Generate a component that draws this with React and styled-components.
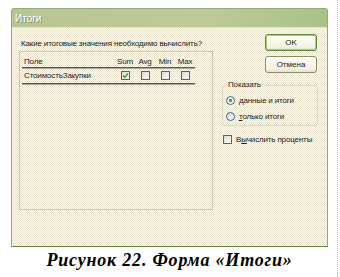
import React from 'react'
import styled, { createGlobalStyle } from 'styled-components'

const GlobalStyle = createGlobalStyle`
  html, body {
    margin: 0;
    padding: 0;
    background: #fff;
  }
  body {
    font-family: "Liberation Sans", Arial, sans-serif;
  }
`

const columns = ['Sum', 'Avg', 'Min', 'Max']

function Check({ checked }) {
  return (
    <CheckBox>
      {checked && (
        <svg width="7" height="7" viewBox="0 0 7 7">
          <path d="M1 3.5 L2.8 5.3 L6 1.5" stroke="#3aa82a" strokeWidth="1.6" fill="none" />
        </svg>
      )}
    </CheckBox>
  )
}

export default function App() {
  return (
    <>
      <GlobalStyle />
      <Page>
        <Window>
          <TitleBar>Итоги</TitleBar>
          <Body>
            <LeftCol>
              <Question>Какие итоговые значения необходимо вычислить?</Question>
              <ListBox>
                <Row $header>
                  <Name>Поле</Name>
                  {columns.map((c) => (
                    <Cell key={c}>{c}</Cell>
                  ))}
                </Row>
                <Row>
                  <Name>СтоимостьЗакупки</Name>
                  {columns.map((c, i) => (
                    <Cell key={c}>
                      <Check checked={i === 0} />
                    </Cell>
                  ))}
                </Row>
              </ListBox>
            </LeftCol>

            <RightCol>
              <Button $default>OK</Button>
              <Button>Отмена</Button>

              <Group>
                <Legend>Показать</Legend>
                <Option>
                  <Radio $on />
                  <span><u>д</u>анные и итоги</span>
                </Option>
                <Option>
                  <Radio />
                  <span><u>т</u>олько итоги</span>
                </Option>
              </Group>

              <Option $spaced>
                <Check />
                <span>В<u>ы</u>числить проценты</span>
              </Option>
            </RightCol>
          </Body>
        </Window>
        <Caption>Рисунок 22. Форма «Итоги»</Caption>
      </Page>
    </>
  )
}

const Page = styled.div`
  width: 338px;
  height: 277px;
  box-sizing: border-box;
  padding: 8px 0 0 11px;
  border-right: 1px dotted #b8b8b8;
`

const Window = styled.div`
  width: 317px;
  height: 239px;
  box-sizing: border-box;
  display: flex;
  flex-direction: column;
  border: 1px solid #93ae6c;
  border-bottom-color: #5f8a3c;
  border-radius: 3px 3px 0 0;
  background-color: #f2f0e3;
  background-image: repeating-conic-gradient(#e6e2cd 0 25%, #fcfbf4 0 50%);
  background-size: 2px 2px;
`

const TitleBar = styled.div`
  height: 18px;
  flex: none;
  padding-left: 3px;
  display: flex;
  align-items: center;
  font-size: 10px;
  color: #fff;
  text-shadow: 1px 1px 0 #7f9060;
  background: linear-gradient(90deg, #b9c592 0%, #bfca98 60%, #a9c28a 100%);
  border-bottom: 1px solid #dfe6c8;
`

const Body = styled.div`
  flex: 1;
  display: flex;
  gap: 9px;
  padding: 6px 9px 0 7px;
  font-size: 8px;
  letter-spacing: -0.15px;
  white-space: nowrap;
  color: #222;
`

const LeftCol = styled.div`
  width: 194px;
  flex: none;
  padding-top: 4px;
  display: flex;
  flex-direction: column;
`

const Question = styled.div`
  height: 11px;
  line-height: 11px;
  padding-left: 2px;
  margin-bottom: 2px;
`

const ListBox = styled.div`
  height: 159px;
  box-sizing: border-box;
  border: 1px solid #cbc7bd;
  padding: 3px 0 0 2px;
`

const Row = styled.div`
  width: 173px;
  display: grid;
  grid-template-columns: 1fr repeat(4, 20px);
  align-items: center;
  height: ${(p) => (p.$header ? '12px' : '15px')};
  border-bottom: 1px solid #5f5f5a;
  box-shadow: 0 1px 0 #a4a49c;
`

const Name = styled.div`
  padding-left: 2px;
`

const Cell = styled.div`
  display: flex;
  justify-content: center;
`

const CheckBox = styled.span`
  width: 9px;
  height: 9px;
  flex: none;
  box-sizing: border-box;
  display: inline-flex;
  align-items: center;
  justify-content: center;
  border: 1px solid #3d6a9a;
  background: linear-gradient(135deg, #dcdbd2 0%, #fbfbf8 100%);
`

const RightCol = styled.div`
  flex: 1;
  display: flex;
  flex-direction: column;
  align-items: flex-start;
`

const Button = styled.button`
  align-self: flex-end;
  margin: 0 1px 5px 0;
  width: 52px;
  height: 17px;
  padding: 0;
  font: 8px "Liberation Sans", Arial, sans-serif;
  color: #222;
  border-radius: 3px;
  border: 1px solid ${(p) => (p.$default ? '#5d8f34' : '#8e8b6c')};
  box-shadow: ${(p) => (p.$default ? 'inset 0 0 0 1px #a9c97c' : 'none')};
  background: linear-gradient(180deg, #fffff8 0%, #f3f1e2 80%, #e4e0c8 100%);
`

const Group = styled.fieldset`
  margin: 2px 0 0 0;
  width: 96px;
  box-sizing: border-box;
  padding: 4px 3px 3px 3px;
  border: 1px solid #dedac2;
  border-radius: 3px;
  display: flex;
  flex-direction: column;
  gap: 4px;
`

const Legend = styled.legend`
  padding: 0 2px;
  line-height: 10px;
  font-size: 8px;
`

const Option = styled.label`
  display: flex;
  align-items: center;
  gap: 4px;
  height: 12px;
  margin-top: ${(p) => (p.$spaced ? '7px' : '0')};
  margin-left: ${(p) => (p.$spaced ? '1px' : '0')};

  u {
    text-decoration-thickness: 1px;
  }
`

const Radio = styled.span`
  width: 9px;
  height: 9px;
  flex: none;
  box-sizing: border-box;
  border-radius: 50%;
  border: 1px solid #3d6a9a;
  background: ${(p) =>
    p.$on
      ? 'radial-gradient(circle, #3fb52e 0 1.6px, #f6f6f0 2px)'
      : 'linear-gradient(135deg, #dcdbd2 0%, #fbfbf8 100%)'};
`

const Caption = styled.div`
  width: 317px;
  margin-top: 4px;
  text-align: center;
  font: italic bold 18px/18px "Liberation Serif", "Times New Roman", serif;
  letter-spacing: 0.8px;
  color: #000;
`
